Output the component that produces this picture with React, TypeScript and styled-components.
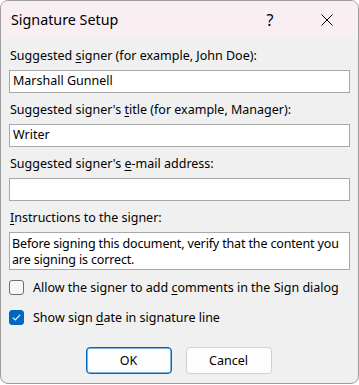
import React from "react";
import styled, { createGlobalStyle } from "styled-components";

const GlobalStyle = createGlobalStyle`
  html, body {
    margin: 0;
    padding: 0;
    background: #ffffff;
  }
  body {
    font-family: "Noto Sans", "Open Sans", sans-serif;
    color: #000000;
  }
`;

const Dialog = styled.div`
  width: 359px;
  height: 384px;
  box-sizing: border-box;
  border: 1px solid #9c9c9c;
  border-radius: 8px;
  overflow: hidden;
  background: #f0f0f0;
  display: flex;
  flex-direction: column;
`;

const TitleBar = styled.div`
  height: 37px;
  background: #f9eef2;
  display: flex;
  align-items: center;
  padding-left: 10px;
`;

const Title = styled.div`
  flex: 1;
  font-size: 14.3px;
`;

const Caption = styled.div<{ width: number }>`
  width: ${({ width }) => width}px;
  height: 37px;
  display: flex;
  align-items: center;
  justify-content: center;
  font-size: 16px;
`;

const Body = styled.div`
  flex: 1;
  display: flex;
  flex-direction: column;
  padding: 10px 8px 0 8px;
`;

const Field = styled.div`
  display: flex;
  flex-direction: column;
  gap: 6px;
  margin-bottom: 9px;
`;

const Label = styled.div`
  font-size: 12.5px;
  line-height: 16px;
  padding-left: 1px;
`;

const Key = styled.span`
  text-decoration: underline;
  text-underline-offset: 2px;
`;

const Input = styled.div<{ tall?: boolean }>`
  box-sizing: border-box;
  height: ${({ tall }) => (tall ? 38 : 23)}px;
  background: #ffffff;
  border: 1px solid #a8a8a8;
  padding: ${({ tall }) => (tall ? "3px 2px" : "2px 3px")};
  font-size: 12.5px;
  line-height: 16px;
  letter-spacing: ${({ tall }) => (tall ? "-0.15px" : "0")};
`;

const CheckRow = styled.div`
  display: flex;
  align-items: center;
  gap: 9px;
  height: 16px;
  font-size: 12.5px;
  margin-bottom: 14px;
`;

const Box = styled.div<{ checked?: boolean }>`
  box-sizing: border-box;
  width: 15px;
  height: 15px;
  border-radius: 3px;
  border: 1px solid ${({ checked }) => (checked ? "#0067c0" : "#6e6e6e")};
  background: ${({ checked }) => (checked ? "#0067c0" : "#f7f7f7")};
  display: flex;
  align-items: center;
  justify-content: center;
`;

const Buttons = styled.div`
  display: flex;
  justify-content: center;
  gap: 14px;
  margin-top: 8px;
  padding-right: 2px;
`;

const Button = styled.div<{ primary?: boolean }>`
  box-sizing: border-box;
  width: 86px;
  height: 27px;
  border-radius: 4px;
  background: #fdfdfd;
  border: 1px solid ${({ primary }) => (primary ? "#0067c0" : "#d0d0d0")};
  box-shadow: ${({ primary }) => (primary ? "inset 0 0 0 0.5px #0067c0" : "none")};
  display: flex;
  align-items: center;
  justify-content: center;
  font-size: 12.5px;
`;

export default function App() {
  return (
    <>
      <GlobalStyle />
      <Dialog>
        <TitleBar>
          <Title>Signature Setup</Title>
          <Caption width={52}>?</Caption>
          <Caption width={62}>
            <svg width="12" height="12" viewBox="0 0 12 12">
              <path d="M0.5 0.5 L11.5 11.5 M11.5 0.5 L0.5 11.5" stroke="#000" strokeWidth="1" />
            </svg>
          </Caption>
        </TitleBar>
        <Body>
          <Field>
            <Label>
              Suggested <Key>s</Key>igner (for example, John Doe):
            </Label>
            <Input>Marshall Gunnell</Input>
          </Field>
          <Field>
            <Label>
              Suggested signer's <Key>t</Key>itle (for example, Manager):
            </Label>
            <Input>Writer</Input>
          </Field>
          <Field>
            <Label>
              Suggested signer's <Key>e</Key>-mail address:
            </Label>
            <Input />
          </Field>
          <Field>
            <Label>
              <Key>I</Key>nstructions to the signer:
            </Label>
            <Input tall>
              Before signing this document, verify that the content you are signing is correct.
            </Input>
          </Field>
          <CheckRow>
            <Box />
            <span>
              Allow the signer to add <Key>c</Key>omments in the Sign dialog
            </span>
          </CheckRow>
          <CheckRow>
            <Box checked>
              <svg width="9" height="7" viewBox="0 0 9 7">
                <path d="M0.8 3.6 L3.2 5.9 L8.2 0.9" stroke="#fff" strokeWidth="1.1" fill="none" />
              </svg>
            </Box>
            <span>
              Show sign <Key>d</Key>ate in signature line
            </span>
          </CheckRow>
          <Buttons>
            <Button primary>OK</Button>
            <Button>Cancel</Button>
          </Buttons>
        </Body>
      </Dialog>
    </>
  );
}
